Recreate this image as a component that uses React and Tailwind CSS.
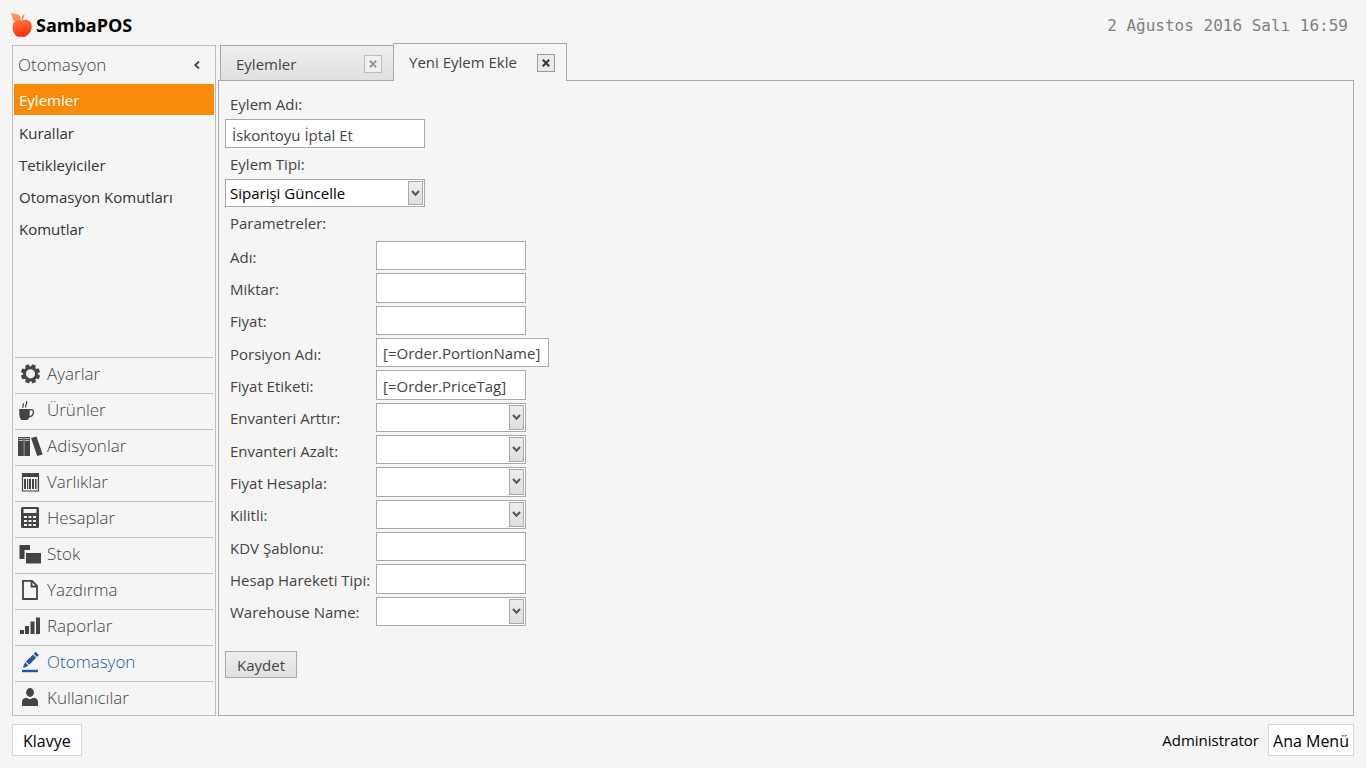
import React, { useState } from 'react';

function AppleLogo() {
  return (
    <svg width="22" height="26" viewBox="0 0 22 26" aria-hidden="true">
      <defs>
        <linearGradient id="apple" x1="0" y1="0" x2="0.3" y2="1">
          <stop offset="0" stopColor="#ff7a45" />
          <stop offset="1" stopColor="#f93208" />
        </linearGradient>
      </defs>
      <path d="M0 .5C3 .2 8.500.2 10.300 3.600c.8 1.600.5 3.400.2 4.900C7 9 2.800 8.500 2.400 4.800 2.200 2.800 1.300 1.500 0 .5z" fill="#ff9256" />
      <path d="M11.400 7.500c.1-2 .7-3.800 2.200-5.700l1 .6c-1.200 1.600-1.900 3.200-2.100 5.100z" fill="#f2703c" />
      <path d="M12 7.600c2.300-1.400 5.800-1.200 7.900.8 2.200 2.300 2.300 6.200.9 9.300-1.400 3-4.200 5.800-6.800 6.200-1 .1-1.800-.2-2.600-.1-.9.100-1.600.3-2.600 0C5.500 23 3.300 19.900 2.800 16.400 2.200 12 3.700 8.300 7 7.300c1.900-.5 3.600-.4 5 .3z" fill="url(#apple)" />
    </svg>
  );
}

function NavIcon({ children }) {
  return (
    <svg width="26" height="22" viewBox="0 0 26 22" fill="currentColor" className="shrink-0" aria-hidden="true">
      {children}
    </svg>
  );
}

const TEETH = [22, 67, 112, 157, 202, 247, 292, 337];

const ICONS = {
  gear: (
    <>
      <circle cx="13.500" cy="10.800" r="6" fill="none" stroke="currentColor" strokeWidth="2.800" />
      {TEETH.map((a) => (
        <path key={a} d="M11.600 1.200h3.800l.5 3.500h-4.800z" transform={`rotate(${a} 13.500 10.800)`} />
      ))}
    </>
  ),
  cup: (
    <>
      <path d="M2.300 10h10.400v5c0 3-1 5-2.200 6h-6C3.300 20 2.300 18 2.300 15z" />
      <path d="M12.500 11c2.900-1 4.400.5 3.900 2.900-.4 2.300-2.100 3.700-4.400 3.900" fill="none" stroke="currentColor" strokeWidth="1.400" />
      <path d="M6.200 8.800c-1.700-2 1.300-2.300-.1-4.600M9 8.600c-2-2.500 2-3.300.4-6.600" fill="none" stroke="currentColor" strokeWidth="1.200" />
    </>
  ),
  books: (
    <>
      <path d="M1 2h5.800v19H1zM7.300 2H13v19H7.300z" />
      <path d="M14 3.100l5.500-1.500 6.200 18-5.500 1.500z" />
      <path d="M1.500 3.500h4.500M1.500 5.500h4.500M8 3.500h4.500M8 5.500h4.500" stroke="#f5f5f5" strokeWidth=".7" />
    </>
  ),
  barcode: (
    <>
      <path d="M5 2h17v4H5z" />
      <path d="M5.500 5v15h16V5" fill="none" stroke="currentColor" strokeWidth="1.200" />
      <path d="M7 8h2v10H7zM10 8h1.200v10H10zM12 8h2v10h-2zM15 8h2v10h-2zM18 8h1v10h-1zM19.500 8h.8v10h-.8z" />
    </>
  ),
  calc: (
    <path
      fillRule="evenodd"
      d="M5.500 0h15q1.500 0 1.500 1.500v18q0 1.500-1.500 1.500h-15Q4 21 4 19.500v-18Q4 0 5.500 0zM6.500 2v4h13V2zM7 9v2h3V9zM11.500 9v2h3V9zM16 9v2h3V9zM7 13v2h3v-2zM11.500 13v2h3v-2zM16 13v2h3v-2zM7 17v2h3v-2zM11.500 17v2h3v-2zM16 17v2h3v-2z"
    />
  ),
  stock: <path d="M2.500 2H13v5H7.500v9h-5zM9 10h15v10.500H9z" />,
  file: (
    <path d="M6 1.800h9l5 5V20H6zM14.500 2v5.500H20" fill="none" stroke="currentColor" strokeWidth="1.800" />
  ),
  bars: <path d="M3 15h4v4H3zM8 11h4v8H8zM13.500 6.500h4V19h-4zM19 2.500h4V19h-4z" />,
  pen: (
    <>
      <path d="M5 18.800h16v2.400H5z" />
      <path d="M18.700.8l3.200 3.200-2 2-3.200-3.200zM16 3.500l3.200 3.200-7 7L9 10.500zM8.200 11.300l3.200 3.200-3.200 2-2 .3.300-2z" />
    </>
  ),
  user: (
    <>
      <ellipse cx="13" cy="5.500" rx="3.900" ry="4.400" />
      <path d="M5 19v-3.800c0-2.600 1.400-4.300 4.200-4.500L13 12.200l3.800-1.500c2.800.2 4.200 1.900 4.200 4.500V19z" />
    </>
  ),
};

const MODULES = [
  ['gear', 'Ayarlar'],
  ['cup', 'Ürünler'],
  ['books', 'Adisyonlar'],
  ['barcode', 'Varlıklar'],
  ['calc', 'Hesaplar'],
  ['stock', 'Stok'],
  ['file', 'Yazdırma'],
  ['bars', 'Raporlar'],
  ['pen', 'Otomasyon'],
  ['user', 'Kullanıcılar'],
];

const PAGES = ['Eylemler', 'Kurallar', 'Tetikleyiciler', 'Otomasyon Komutları', 'Komutlar'];

const PARAMETERS = [
  { id: 'adi', label: 'Adı:' },
  { id: 'miktar', label: 'Miktar:' },
  { id: 'fiyat', label: 'Fiyat:' },
  { id: 'porsiyon', label: 'Porsiyon Adı:', value: '[=Order.PortionName]', wide: true },
  { id: 'etiket', label: 'Fiyat Etiketi:', value: '[=Order.PriceTag]' },
  { id: 'arttir', label: 'Envanteri Arttır:', select: true },
  { id: 'azalt', label: 'Envanteri Azalt:', select: true },
  { id: 'hesapla', label: 'Fiyat Hesapla:', select: true },
  { id: 'kilitli', label: 'Kilitli:', select: true },
  { id: 'kdv', label: 'KDV Şablonu:' },
  { id: 'hareket', label: 'Hesap Hareketi Tipi:' },
  { id: 'warehouse', label: 'Warehouse Name:', select: true },
];

function Sidebar() {
  const [page, setPage] = useState('Eylemler');
  return (
    <aside className="mt-0.5 flex w-[204px] shrink-0 flex-col border border-[#bdbdbd]">
      <div className="flex h-[38px] items-center justify-between pr-2.5 pl-[5px]">
        <h2 className="text-[17px] font-light text-[#444444]">Otomasyon</h2>
        <button type="button" aria-label="Daralt" className="flex h-6 w-4 items-center justify-center text-[#444444]">
          <svg width="8" height="8" viewBox="0 0 8 8" fill="none" stroke="currentColor" strokeWidth="1.800" aria-hidden="true">
            <path d="M6 .5L2.200 4 6 7.500" />
          </svg>
        </button>
      </div>
      <nav className="flex flex-col gap-px px-px">
        {PAGES.map((name) => (
          <a
            key={name}
            href="#"
            onClick={() => setPage(name)}
            className={
              name === page
                ? 'h-[31px] bg-[#f88c0a] pl-[5px] text-[15px] leading-8 text-white'
                : 'h-[31px] pl-[5px] text-[15px] leading-[34px] text-[#333333]'
            }
          >
            {name}
          </a>
        ))}
      </nav>
      <nav className="mx-0.5 mt-auto">
        {MODULES.map(([icon, name]) => (
          <a
            key={name}
            href="#"
            className={
              'block h-9 border-t border-[#bdbdbd] pl-0.5 last:h-[34px] ' +
              (icon === 'pen' ? 'text-[#2b579a]' : 'text-[#444444]')
            }
          >
            <span className="flex h-8 items-center gap-1">
              <NavIcon>{ICONS[icon]}</NavIcon>
              <span className="text-[17px] font-light">{name}</span>
            </span>
          </a>
        ))}
      </nav>
    </aside>
  );
}

function CloseButton({ active, label }) {
  return (
    <button
      type="button"
      aria-label={label}
      className={
        'flex size-[18px] items-center justify-center border ' +
        (active ? 'border-[#9a9a9a] bg-[#e9e9e9] text-[#333333]' : 'border-[#bdbdbd] bg-[#f0f0f0] text-[#999999]')
      }
    >
      <svg width="8" height="8" viewBox="0 0 8 8" fill="none" stroke="currentColor" strokeWidth="2" aria-hidden="true">
        <path d="M.8.8l6.400 6.400M7.200.8L.8 7.200" />
      </svg>
    </button>
  );
}

function SelectBox({ id, options, className }) {
  return (
    <div className={'relative ' + className}>
      <select
        id={id}
        className="block h-full w-full appearance-none border border-[#a9a9a9] bg-white pt-px pr-5 pl-1 text-[15px] text-black outline-none"
      >
        {options.map((o) => (
          <option key={o}>{o}</option>
        ))}
      </select>
      <span className="pointer-events-none absolute inset-y-0.5 right-0.5 flex w-[15px] items-center justify-center border border-[#a9a9a9] bg-linear-to-b from-[#eeeeee] to-[#dedede]">
        <svg width="9" height="7" viewBox="0 0 9 7" fill="none" stroke="#555555" strokeWidth="2" className="shrink-0" aria-hidden="true">
          <path d="M1 1l3.500 3.800L8 1" />
        </svg>
      </span>
    </div>
  );
}

const INPUT = 'border border-[#a9a9a9] bg-white px-1.5 pt-0.5 text-[15px] text-[#444444] outline-none ';

function ActionForm() {
  return (
    <form className="flex flex-1 flex-col items-start border border-[#a9a9a9] px-1.5 pt-[9px] text-[15px] text-[#444444]">
      <label htmlFor="action-name" className="pb-px pl-[5px] leading-7">Eylem Adı:</label>
      <input id="action-name" defaultValue="İskontoyu İptal Et" className={INPUT + 'h-[29px] w-[200px]'} />
      <label htmlFor="action-type" className="mt-0.5 pb-px pl-[5px] leading-7">Eylem Tipi:</label>
      <SelectBox id="action-type" options={['Siparişi Güncelle']} className="h-[28px] w-[200px]" />
      <h3 className="mt-0.5 mb-1 pl-[5px] leading-7">Parametreler:</h3>
      <div className="grid min-h-[385px] auto-rows-fr grid-cols-[151px_auto] gap-y-[3px]">
        {PARAMETERS.map((p) => (
          <React.Fragment key={p.id}>
            <label htmlFor={p.id} className="self-center pt-0.5 pl-[5px] leading-6 whitespace-nowrap">{p.label}</label>
            {p.select ? (
              <SelectBox id={p.id} options={['']} className="w-[150px]" />
            ) : (
              <input
                id={p.id}
                defaultValue={p.value}
                className={INPUT + (p.wide ? 'w-[173px]' : 'w-[150px]')}
              />
            )}
          </React.Fragment>
        ))}
      </div>
      <button
        type="button"
        className="mt-[25px] mb-9 h-[27px] border border-[#a9a9a9] bg-linear-to-b from-[#eeeeee] to-[#e0e0e0] px-[11px] leading-6"
      >
        Kaydet
      </button>
    </form>
  );
}

export default function App() {
  return (
    <div className="flex min-h-screen flex-col bg-[#f5f5f5] pr-3 pb-3 pl-3 font-['Open_Sans','Noto_Sans',sans-serif]">
      <header className="flex h-[43px] items-center justify-between pt-2 pr-1.5">
        <div className="-ml-0.5 flex items-center gap-1">
          <AppleLogo />
          <h1 className="text-[18px] font-bold text-black">SambaPOS</h1>
        </div>
        <time className="font-['DejaVu_Sans_Mono',monospace] text-base text-[#808080]">2 Ağustos 2016 Salı 16:59</time>
      </header>

      <div className="flex flex-1 gap-0.5">
        <Sidebar />
        <main className="flex min-w-0 flex-1 flex-col">
          <div className="flex h-[37px] items-end pl-0.5 text-[15px] text-[#444444]">
            <div className="flex h-[35px] w-[173px] items-center justify-between border border-r-0 border-b-0 border-[#a9a9a9] bg-linear-to-b from-[#eeeeee] to-[#e0e0e0] pt-0.5 pr-[11px] pl-[15px]">
              <button type="button">Eylemler</button>
              <CloseButton label="Eylemler sekmesini kapat" />
            </div>
            <div className="relative z-10 -mb-px flex h-[38px] w-[174px] items-center justify-between border border-b-0 border-[#a9a9a9] bg-[#f5f5f5] pr-[11px] pl-[15px]">
              <button type="button">Yeni Eylem Ekle</button>
              <CloseButton active label="Yeni Eylem Ekle sekmesini kapat" />
            </div>
          </div>
          <ActionForm />
        </main>
      </div>

      <footer className="mt-2 flex h-8 items-stretch justify-between text-black">
        <button type="button" className="border border-[#d6d6d6] bg-white px-2.5 pt-0.5 text-base">Klavye</button>
        <div className="flex items-center gap-[9px]">
          <span className="text-[15px]">Administrator</span>
          <button type="button" className="h-8 border border-[#d6d6d6] bg-white px-1 pt-0.5 text-base">Ana Menü</button>
        </div>
      </footer>
    </div>
  );
}
